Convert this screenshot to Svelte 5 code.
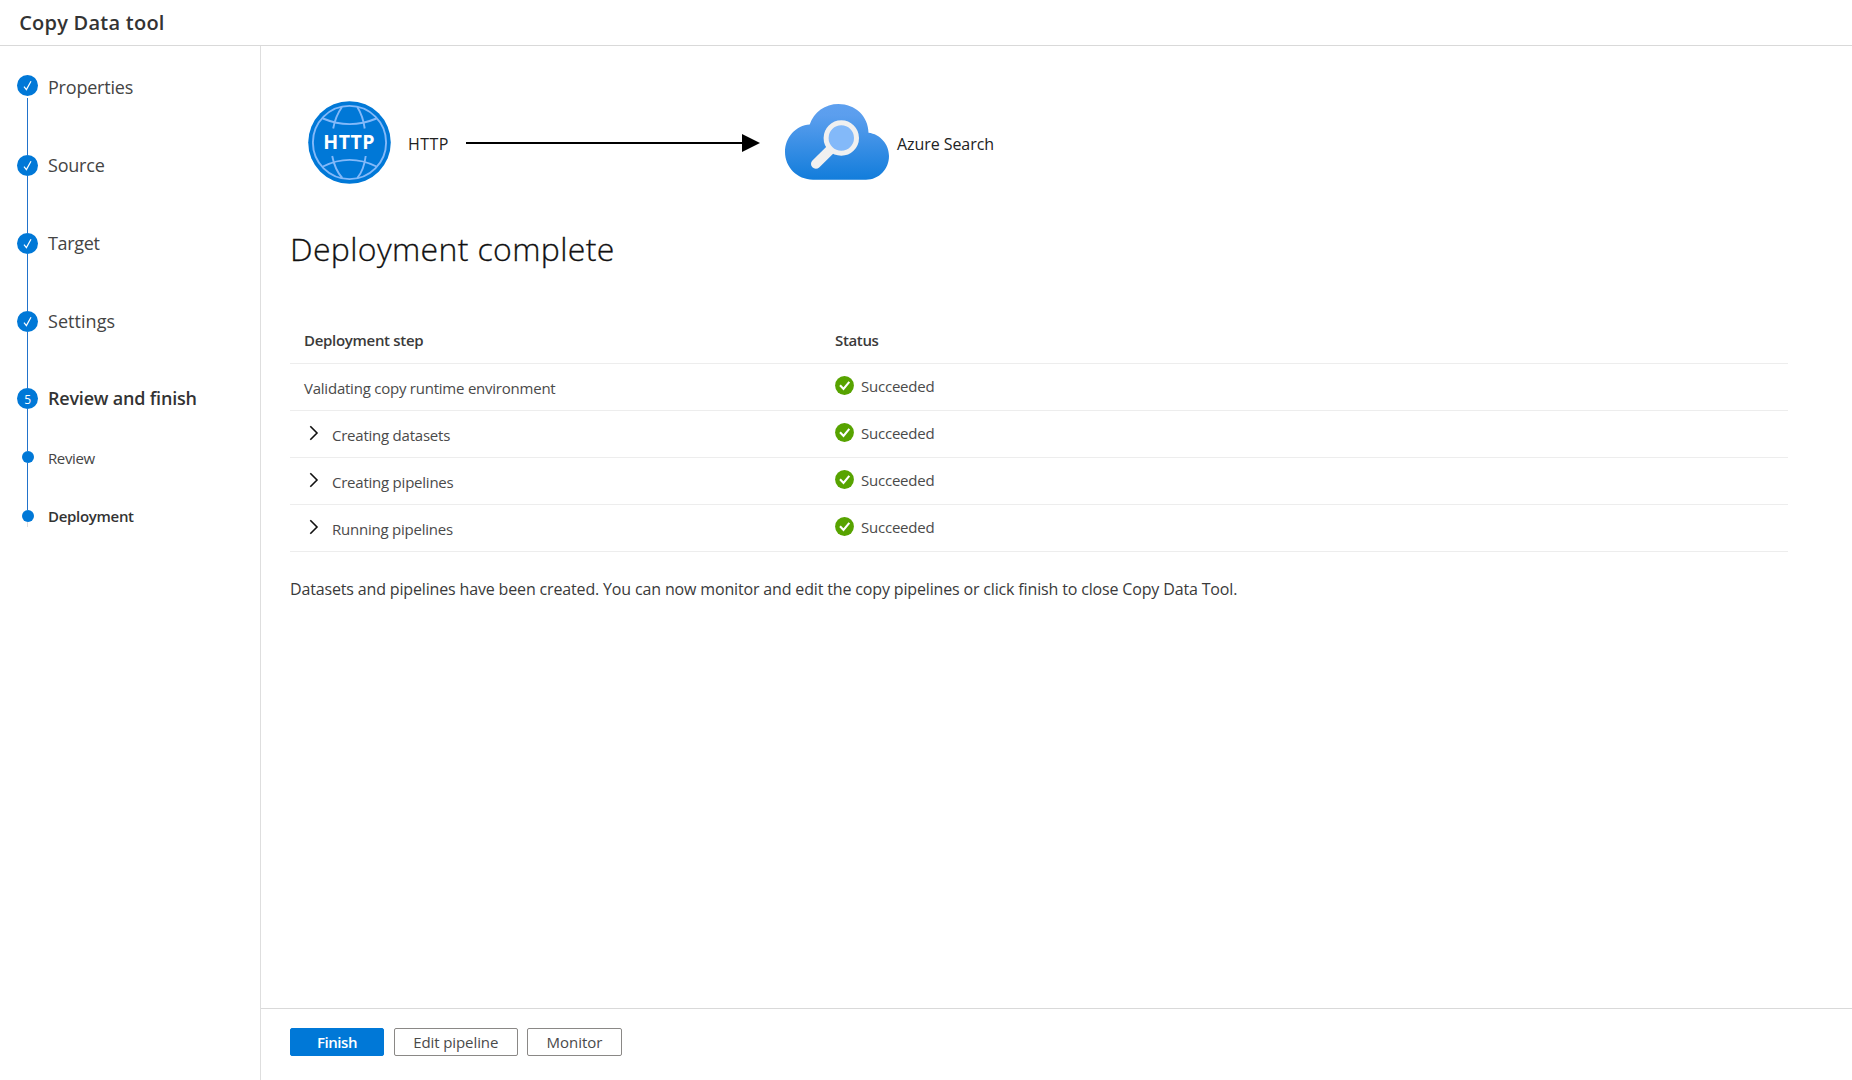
<script>
  const steps = [
    { label: 'Properties', mark: 'check', kind: 'main', extra: 'first' },
    { label: 'Source', mark: 'check', kind: 'main', extra: '' },
    { label: 'Target', mark: 'check', kind: 'main', extra: 'tight' },
    { label: 'Settings', mark: 'check', kind: 'main', extra: 'loose' },
    { label: 'Review and finish', mark: '5', kind: 'main', extra: 'current' },
    { label: 'Review', mark: '', kind: 'sub', extra: '' },
    { label: 'Deployment', mark: '', kind: 'sub', extra: 'current last' }
  ];
  const rows = [
    { name: 'Validating copy runtime environment', expandable: false },
    { name: 'Creating datasets', expandable: true },
    { name: 'Creating pipelines', expandable: true },
    { name: 'Running pipelines', expandable: true }
  ];
</script>

<div class="app">
  <header><h1>Copy Data tool</h1></header>
  <div class="body">
    <nav>
      <ol>
        {#each steps as step}
          <li class="{step.kind} {step.extra}">
            <span class="track">
              <span class="marker">
                {#if step.mark === 'check'}
                  <svg width="9" height="11" viewBox="0 0 9 11"><path d="M1 6.6 3.4 9.6 8 1.2" fill="none" stroke="#fff" stroke-width="1.2" /></svg>
                {:else}{step.mark}{/if}
              </span>
              <span class="line"></span>
            </span>
            <span class="label">{step.label}</span>
          </li>
        {/each}
      </ol>
    </nav>
    <div class="content">
      <main>
        <div class="flow">
          <svg class="globe" width="83" height="83" viewBox="0 0 83 83">
            <circle cx="41.5" cy="41.5" r="41.3" fill="#0078d7" />
            <g fill="none" stroke="#83b9f9" stroke-width="1.9">
              <circle cx="41.5" cy="41.5" r="36.6" />
              <path d="M15 17.5Q41.5 28.7 68.5 17.5M15 65.5Q41.5 52.3 68.5 65.5" />
              <path d="M34 6Q27.5 15 25.2 27.5M49.3 6Q55 15 56.7 27.5M24.2 55Q27 69 34.3 77M57.7 55Q56 69 49.3 77" />
            </g>
            <text x="41.2" y="48.4" text-anchor="middle">HTTP</text>
          </svg>
          <span class="from">HTTP</span>
          <svg class="arrow" width="294" height="18" viewBox="0 0 294 18"><path d="M0 9H278" stroke="#000" stroke-width="2" /><path d="M276 0 294 9 276 18Z" /></svg>
          <svg class="cloud" width="104" height="76" viewBox="0 0 104 76">
            <defs><linearGradient id="sky" x1="0" y1="0" x2="0" y2="1"><stop offset="0" stop-color="#5ea0ef" /><stop offset=".15" stop-color="#5b9eee" /><stop offset="1" stop-color="#127ddb" /></linearGradient></defs>
            <path d="M28 75.7C12 75.5 0 63 0 48 0 33 11 21.5 24.7 20.5 29 8 40 0 53.5 0 70 0 83.3 12 83.5 28.7 95 30 104 40 104 52 104 65 94 75.7 81 75.7Z" fill="url(#sky)" />
            <path d="M46 45 30.8 60" stroke="#f0f0f0" stroke-width="9.6" stroke-linecap="round" />
            <circle cx="56.3" cy="34" r="15.2" fill="#83b9f9" stroke="#f0f0f0" stroke-width="5" />
          </svg>
          <span class="to">Azure Search</span>
        </div>
        <h2>Deployment complete</h2>
        <div class="table">
          <div class="row head"><div class="name">Deployment step</div><div class="status">Status</div></div>
          {#each rows as row}
            <div class="row">
              <div class="name">
                {#if row.expandable}
                  <svg class="chevron" width="10" height="16" viewBox="0 0 10 16"><path d="M1.3 1.2 8 8 1.3 14.8" fill="none" stroke="#111" stroke-width="1.6" /></svg>
                {/if}
                <span>{row.name}</span>
              </div>
              <div class="status">
                <svg width="19" height="19" viewBox="0 0 19 19"><circle cx="9.5" cy="9.5" r="9.4" fill="#57a300" /><path d="M5 9.3 8.5 13 14.3 5.9" fill="none" stroke="#fff" stroke-width="2.1" /></svg>
                <span>Succeeded</span>
              </div>
            </div>
          {/each}
        </div>
        <p>Datasets and pipelines have been created. You can now monitor and edit the copy pipelines or click finish to close Copy Data Tool.</p>
      </main>
      <footer>
        <button class="finish">Finish</button>
        <button class="edit">Edit pipeline</button>
        <button class="monitor">Monitor</button>
      </footer>
    </div>
  </div>
</div>

<style>
  :global(body) { background: #fff; }
  .app { height: 1080px; display: flex; flex-direction: column; font-family: 'Open Sans', 'Noto Sans', sans-serif; color: #3a3a3a; font-size: 15px; overflow: hidden; }
  .app, .app * { box-sizing: border-box; }
  h1, h2, p, ol { margin: 0; padding: 0; }
  svg { display: block; flex: none; }
  header { height: 46px; flex: none; border-bottom: 1px solid #d9d9d9; padding-left: 19.2px; }
  h1 { font-size: 20px; line-height: 45px; font-weight: 600; letter-spacing: .24px; color: #333; }
  .body { flex: 1; display: flex; min-height: 0; }
  nav { width: 261px; flex: none; border-right: 1px solid #dedede; padding: 28.5px 0 0 17.3px; }
  ol { list-style: none; }
  li { display: flex; height: 78px; }
  .first { height: 80.3px; }
  .loose { height: 77.6px; }
  .main.current, .sub { height: 58.6px; }
  .sub.last { height: 21px; }
  .track { width: 21px; display: flex; flex-direction: column; align-items: center; }
  .marker { width: 21px; height: 21px; flex: none; border-radius: 50%; background: #0078d7; color: #fff; display: flex; align-items: center; justify-content: center; font-size: 12px; line-height: 21px; padding-top: 1px; }
  .line { width: 1px; flex: 1; background: #2273cb; }
  .first .line { margin-top: 2.5px; }
  .sub .marker { width: 12px; height: 12px; margin-top: 4.5px; padding: 0; }
  .last .line { background: #ddd; }
  .sub .track { height: calc(100% + 4.5px); }
  .last .track { height: 21px; }
  .main.current .track { height: calc(100% + 4.5px); }
  .label { margin-left: 9.7px; font-size: 18px; line-height: 21px; letter-spacing: -.2px; color: #444; }
  .first .label { padding-top: 2.5px; }
  .tight .label { letter-spacing: -.33px; }
  .loose .label { letter-spacing: .05px; }
  .current .label { font-weight: 600; color: #333; }
  .sub .label { font-size: 15px; line-height: 22px; letter-spacing: -.38px; }
  .sub.current .label { letter-spacing: -.3px; line-height: 21px; }

  .content { flex: 1; display: flex; flex-direction: column; min-width: 0; }
  main { flex: 1; padding: 55px 64px 0 29px; }
  .flow { display: flex; align-items: center; height: 83px; padding-left: 17.6px; color: #222; font-size: 16px; }
  .globe text { font-size: 19.5px; font-weight: 700; fill: #fff; letter-spacing: .5px; }
  .from { width: 58.5px; margin-left: 17.3px; letter-spacing: .5px; padding-top: 3px; }
  .arrow { margin-left: .1px; }
  .cloud { margin: 0 0 1.6px 24.8px; }
  .to { margin-left: 7.6px; padding-top: 3px; letter-spacing: -.05px; }
  h2 { margin-top: 40px; font-size: 32px; line-height: 50px; font-weight: 300; letter-spacing: .35px; color: #111; -webkit-text-stroke: .3px #111; }
  .table { margin-top: 45px; }
  .row { display: grid; grid-template-columns: 531px 1fr; height: 47.1px; padding-left: 14px; border-bottom: 1px solid #ededed; line-height: 22px; letter-spacing: -.23px; color: #4a4a4a; }
  .head { height: 45px; font-weight: 600; color: #3a3a3a; letter-spacing: -.3px; padding-top: 10px; }
  .head .status { padding-top: 0; letter-spacing: -.35px; }
  .name { display: flex; padding: 13px 0 0 0; }
  .head .name { padding-top: 0; }
  .chevron { margin: 1px 12.6px 0 5.4px; }
  .status { display: flex; padding-top: 12px; letter-spacing: -.22px; }
  .status svg { margin: 0 7px 0 0; }
  .status span { margin-top: -1px; }
  p { margin-top: 24.4px; font-size: 16px; line-height: 24px; letter-spacing: -.155px; white-space: nowrap; }
  footer { height: 72px; flex: none; border-top: 1px solid #d9d9d9; display: flex; gap: 10px; padding: 19px 0 0 29px; }
  button { height: 28px; padding: 0 0 1px; border: 1px solid #8a8886; border-radius: 2px; background: #fff; color: #4a4a4a; font: 400 15px/26px 'Open Sans', 'Noto Sans', sans-serif; }
  .finish { width: 94px; border-color: #0078d7; background: #0078d7; color: #fff; font-weight: 600; letter-spacing: -.45px; }
  .edit { width: 123.5px; letter-spacing: -.1px; }
  .monitor { width: 95px; margin-left: -.5px; }
</style>
